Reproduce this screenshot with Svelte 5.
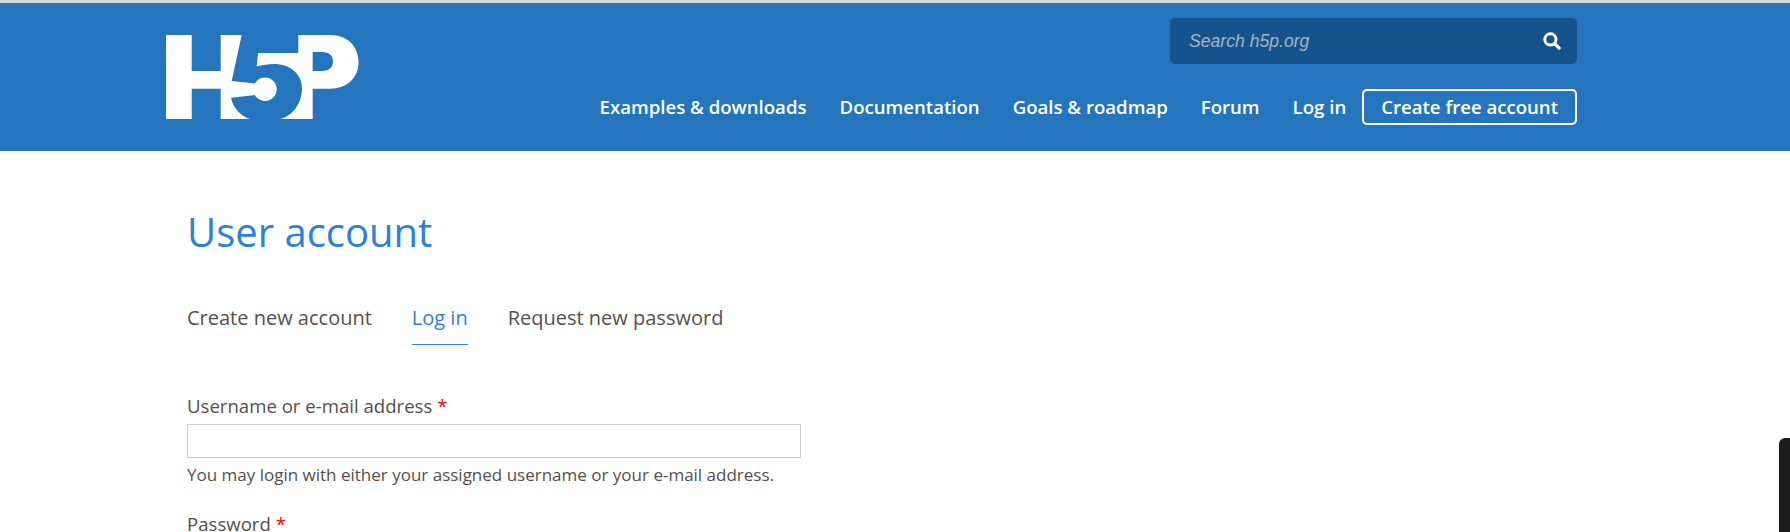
<script>
  const navItems = ["Examples & downloads", "Documentation", "Goals & roadmap", "Forum", "Log in"];
  const tabs = [
    { label: "Create new account", active: false },
    { label: "Log in", active: true },
    { label: "Request new password", active: false },
  ];
</script>

<div class="page">
  <header class="site_header">
    <svg class="logo" viewBox="166 35 193 84" width="193" height="84" aria-label="H5P logo">
      <path
        fill="#fff"
        d="M166 35H191.7V71H220.7V35H330C347 35 358.5 46 358.5 62C358.5 78 347 88.7 330 88.7H312.7V119H220.7V88.7H191.7V119H166Z"
      />
      <path
        fill="#2575be"
        d="M312.7 52H322C329.5 52 333 56 333 61.5C333 67 329.5 71 322 71H312.7Z"
      />
      <path
        fill="#2575be"
        d="M241.7 35L231.7 81L255 83.5V95L231 97.7C233 108 241 116 250 119H280C293 116 302 103 302 88C302 74 290 64 274 64C268 64 262 65 256.7 66.5L258 53H298.3V35Z"
      />
      <circle fill="#fff" cx="265" cy="89.3" r="11.7" />
    </svg>

    <div class="header_right">
      <div class="search">
        <span class="search_text">Search h5p.org</span>
        <svg class="search_icon" viewBox="0 0 18 18" width="18" height="18">
          <circle cx="7.4" cy="7.4" r="5.6" fill="none" stroke="#fff" stroke-width="3" />
          <path d="M11.6 11.6L16.2 16.2" stroke="#fff" stroke-width="3.2" stroke-linecap="round" />
        </svg>
      </div>

      <nav class="main_nav">
        {#each navItems as item}
          <a href="#top">{item}</a>
        {/each}
        <a class="signup" href="#top">Create free account</a>
      </nav>
    </div>
  </header>

  <main class="content">
    <h1>User account</h1>

    <div class="tabs">
      {#each tabs as tab}
        <a class="tab" class:active={tab.active} href="#top">{tab.label}</a>
      {/each}
    </div>

    <form class="login_form">
      <div class="field">
        <label for="username">Username or e-mail address <span class="req">*</span></label>
        <input id="username" type="text" />
        <p class="help">You may login with either your assigned username or your e-mail address.</p>
      </div>
      <div class="field">
        <label for="password">Password <span class="req">*</span></label>
      </div>
    </form>
  </main>

  <div class="side_widget"></div>
</div>

<style>
  :global(body) {
    margin: 0;
    background: #fff;
  }

  .page {
    position: relative;
    height: 532px;
    overflow: hidden;
    font-family: "Open Sans", sans-serif;
    color: #55504d;
  }

  .site_header {
    height: 148px;
    border-top: 3px solid #d9d9d9;
    background: #2575be;
    padding: 0 213px 0 166px;
    display: flex;
    justify-content: space-between;
  }

  .logo {
    margin-top: 32px;
    display: block;
  }

  .header_right {
    display: flex;
    flex-direction: column;
    align-items: flex-end;
    padding-top: 15px;
    gap: 25px;
  }

  .search {
    width: 407px;
    height: 46px;
    box-sizing: border-box;
    padding: 0 16px 0 19px;
    display: flex;
    align-items: center;
    justify-content: space-between;
    background: #16538c;
    border-radius: 5px;
  }

  .search_text {
    font-family: "Liberation Sans", sans-serif;
    font-style: italic;
    font-size: 17.6px;
    color: #a5b3c2;
  }

  .main_nav {
    display: flex;
    align-items: center;
    gap: 33px;
  }

  .main_nav a {
    padding-bottom: 2px;
    color: #fff;
    font-size: 18.6px;
    font-weight: 600;
    text-decoration: none;
  }

  .main_nav .signup {
    margin-left: -17px;
    height: 36px;
    box-sizing: border-box;
    padding: 0 17px 2px;
    display: flex;
    align-items: center;
    border: 2px solid #fff;
    border-radius: 5px;
  }

  .content {
    padding: 53px 0 0 187px;
  }

  h1 {
    margin: 0;
    font-size: 40px;
    line-height: 55px;
    font-weight: 400;
    color: #2a82da;
  }

  .tabs {
    margin-top: 41px;
    display: flex;
    gap: 40px;
  }

  .tab {
    padding: 6px 0 14px;
    font-size: 20px;
    line-height: 24px;
    color: #55504d;
    text-decoration: none;
    border-bottom: 1px solid transparent;
  }

  .tab.active {
    color: #2a82da;
    border-bottom-color: #2a82da;
  }

  .login_form {
    margin-top: 49px;
    width: 614px;
    display: flex;
    flex-direction: column;
    gap: 27px;
  }

  .field label {
    display: block;
    margin-bottom: 6px;
    font-size: 18.6px;
    line-height: 24px;
  }

  .req {
    color: #f00;
  }

  .field input {
    display: block;
    width: 100%;
    height: 34px;
    box-sizing: border-box;
    margin: 0;
    border: 1px solid #ccc;
    background: #fff;
  }

  .help {
    margin: 7px 0 0;
    font-size: 17px;
    line-height: 20px;
  }

  .side_widget {
    position: absolute;
    left: 1779px;
    right: 0;
    top: 438px;
    bottom: 0;
    background: #1c1c1c;
    border-top-left-radius: 6px;
  }
</style>
